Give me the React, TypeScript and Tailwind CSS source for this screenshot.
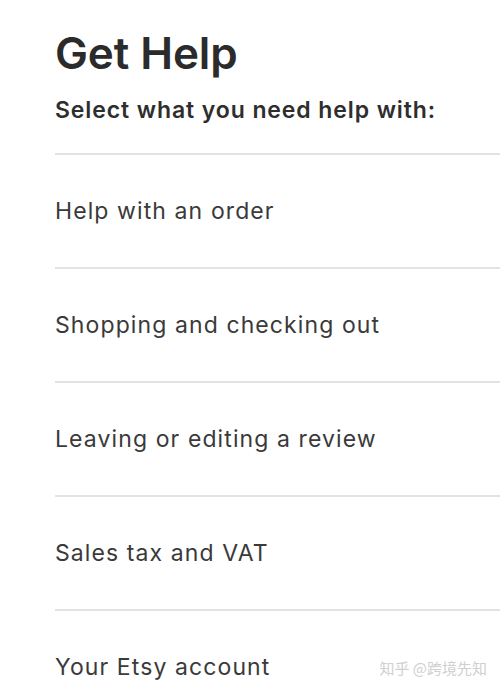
import React from "react";

const topics = [
  "Help with an order",
  "Shopping and checking out",
  "Leaving or editing a review",
  "Sales tax and VAT",
  "Your Etsy account",
];

export default function App() {
  return (
    <div
      className="relative w-[500px] h-[693px] overflow-hidden bg-white text-[#2b2b2b]"
      style={{ fontFamily: "Inter, 'Noto Sans', sans-serif" }}
    >
      <div className="pl-[55px] pt-[27px]">
        <h1 className="text-[44px] leading-[52px] font-semibold tracking-[-0.1px]">Get Help</h1>
        <p className="mt-[17px] text-[23px] leading-[28px] font-semibold tracking-[0.9px] text-[#2e2e2e]">
          Select what you need help with:
        </p>
        <ul className="mt-[29px]">
          {topics.map((t) => (
            <li
              key={t}
              className="h-[114px] flex items-center border-t-2 border-[#e3e3e3] text-[23px] tracking-[1.1px] text-[#3a3a3a]"
            >
              {t}
            </li>
          ))}
        </ul>
      </div>
      <div
        className="absolute right-[13px] bottom-[14px] text-[15px] text-[#cfcfcf]"
        style={{ fontFamily: "'Noto Sans CJK SC', 'Noto Sans', sans-serif" }}
      >
        知乎 @跨境先知
      </div>
    </div>
  );
}
